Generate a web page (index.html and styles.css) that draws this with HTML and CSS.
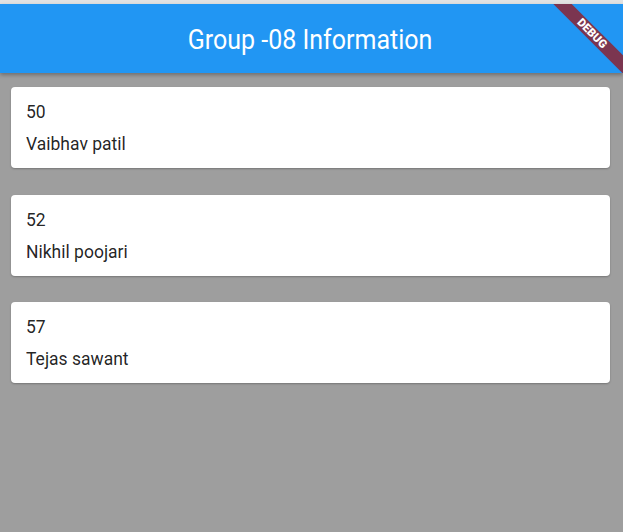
FILE: index.html
```html
<!DOCTYPE html>
<html>
<head>
<meta charset="utf-8">
<link rel="stylesheet" href="styles.css">
</head>
<body>
<div class="status"></div>
<header class="appbar"><h1 class="title">Group -08 Information</h1></header>
<main class="list">
  <div class="card"><div class="line">50</div><div class="line">Vaibhav patil</div></div>
  <div class="card"><div class="line">52</div><div class="line">Nikhil poojari</div></div>
  <div class="card"><div class="line">57</div><div class="line">Tejas sawant</div></div>
</main>
<div class="banner-clip"><div class="banner">DEBUG</div></div>
</body>
</html>
```

FILE: styles.css
```css
html, body {
  margin: 0;
  padding: 0;
  height: 100%;
}
body {
  background: #9e9e9e;
  font-family: Roboto, "Noto Sans", sans-serif;
  overflow: hidden;
  position: relative;
}
.status {
  height: 4px;
  background: #e2e2e2;
}
.appbar {
  height: 69px;
  background: #2196f3;
  display: flex;
  align-items: center;
  justify-content: center;
  box-shadow: 0 2px 4px rgba(0,0,0,0.3);
  position: relative;
  z-index: 1;
}
.title {
  margin: 0 0 0 -3px;
  color: #fff;
  font-weight: 400;
  font-size: 25px;
  line-height: 1;
  padding-top: 1px;
  transform: scaleY(1.08);
}
.list {
  display: flex;
  flex-direction: column;
  gap: 26.5px;
  padding: 14px 13px 0 11px;
}
.card {
  background: #fff;
  border-radius: 4px;
  height: 81px;
  box-sizing: border-box;
  padding: 15px 15px 0 15px;
  display: flex;
  flex-direction: column;
  gap: 12px;
  box-shadow: 0 1px 2px rgba(0,0,0,0.25);
}
.line {
  font-size: 17.5px;
  line-height: 20px;
  color: rgba(0,0,0,0.87);
  transform-origin: left center;
  transform: scaleY(1.04);
}
.banner-clip {
  position: absolute;
  top: 4px;
  right: 0;
  width: 100px;
  height: 69px;
  overflow: hidden;
  z-index: 2;
}
.banner {
  position: absolute;
  left: 4px;
  top: 23px;
  width: 130px;
  height: 13px;
  background: #7b3550;
  color: #fff;
  font-family: Roboto, sans-serif;
  font-weight: 900;
  font-size: 11.5px;
  line-height: 13px;
  text-align: center;
  transform: rotate(45deg);
}
```
